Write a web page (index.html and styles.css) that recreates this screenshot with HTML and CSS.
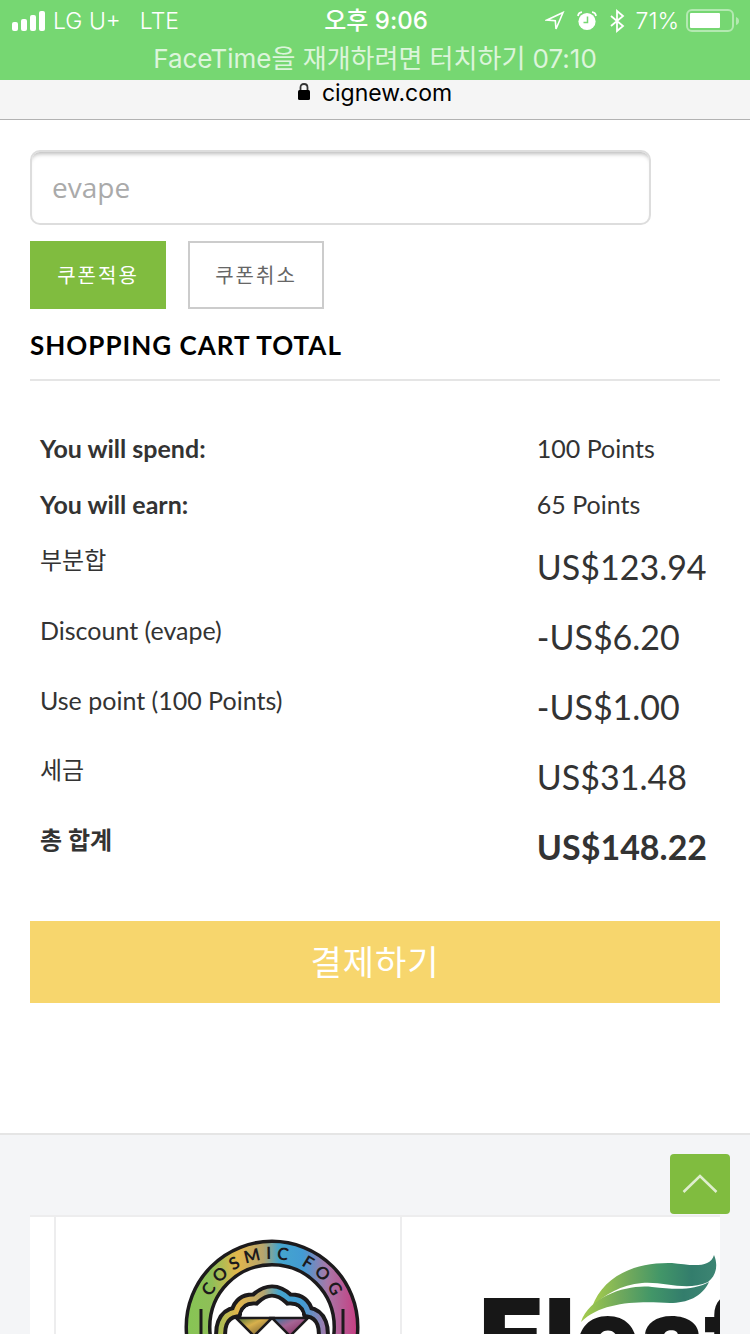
FILE: index.html
```html
<!DOCTYPE html>
<html lang="ko">
<head>
    <meta charset="UTF-8">
    <meta name="viewport" content="width=device-width, initial-scale=1.0">
    <title>cignew.com</title>
    <link rel="stylesheet" href="styles.css">
</head>
<body>
    <header class="status">
        <div class="status-row">
            <div class="status-left">
                <svg class="signal" width="34" height="20" viewBox="0 0 34 20" fill="#fff">
                    <rect x="0" y="11" width="6" height="9" rx="2"/>
                    <rect x="9" y="8" width="6" height="12" rx="2"/>
                    <rect x="18" y="4" width="6" height="16" rx="2"/>
                    <rect x="27" y="0" width="6" height="20" rx="2"/>
                </svg>
                <span>LG U+</span>
                <span class="network">LTE</span>
            </div>
            <div class="clock">오후 9:06</div>
            <div class="status-right">
                <svg width="20" height="20" viewBox="0 0 20 20" fill="none" stroke="#fff" stroke-width="1.6">
                    <path d="M18 1.5 L2 9 L10.3 9.7 L11 18 Z"/>
                </svg>
                <svg class="alarm" width="20" height="20" viewBox="0 0 20 20">
                    <circle cx="10" cy="10.5" r="8.6" fill="#fff"/>
                    <path d="M1 5 Q1.5 1.5 5 1.2 M15 1.2 Q18.5 1.5 19 5" fill="none" stroke="#fff" stroke-width="1.8"/>
                    <path d="M10.5 5.5 V11.5 H6.5" fill="none" stroke="#76d772" stroke-width="1.5"/>
                </svg>
                <svg width="16" height="24" viewBox="0 0 16 24" fill="none" stroke="#fff" stroke-width="1.8">
                    <path d="M2 7 L14 17 L8 22 V2 L14 7 L2 17"/>
                </svg>
                <span class="percent">71%</span>
                <svg class="battery" width="54" height="24" viewBox="0 0 54 24">
                    <rect x="1" y="1" width="46" height="21" rx="5" fill="none" stroke="#fff" stroke-opacity=".45" stroke-width="2"/>
                    <rect x="4" y="4" width="30" height="15" rx="1" fill="#fff"/>
                    <path d="M50 8 Q53 9 53 12 Q53 15 50 16 Z" fill="#fff" fill-opacity=".45"/>
                </svg>
            </div>
        </div>
        <div class="call">FaceTime을 재개하려면 터치하기 07:10</div>
    </header>

    <div class="url-bar">
        <svg width="12" height="18" viewBox="0 0 12 18">
            <path d="M2.5 8 V4.5 Q2.5 1 6 1 Q9.5 1 9.5 4.5 V8" fill="none" stroke="#333" stroke-width="1.8"/>
            <rect x="0" y="7" width="12" height="10" rx="1.5" fill="#000"/>
        </svg>
        <span>cignew.com</span>
    </div>

    <main class="cart">
        <form class="coupon">
            <input type="text" class="coupon-code" placeholder="evape" aria-label="쿠폰 코드">
            <div class="coupon-actions">
                <button type="button" class="btn btn-apply">쿠폰적용</button>
                <button type="button" class="btn btn-cancel">쿠폰취소</button>
            </div>
        </form>

        <h2>SHOPPING CART TOTAL</h2>

        <table class="totals">
            <tbody>
                <tr class="points">
                    <th scope="row">You will spend:</th>
                    <td>100 Points</td>
                </tr>
                <tr class="points">
                    <th scope="row">You will earn:</th>
                    <td>65 Points</td>
                </tr>
                <tr>
                    <th scope="row" class="ko">부분합</th>
                    <td>US$123.94</td>
                </tr>
                <tr>
                    <th scope="row">Discount (evape)</th>
                    <td>-US$6.20</td>
                </tr>
                <tr>
                    <th scope="row">Use point (100 Points)</th>
                    <td>-US$1.00</td>
                </tr>
                <tr>
                    <th scope="row" class="ko">세금</th>
                    <td>US$31.48</td>
                </tr>
                <tr class="grand">
                    <th scope="row" class="ko">총 합계</th>
                    <td>US$148.22</td>
                </tr>
            </tbody>
        </table>

        <button type="button" class="checkout">결제하기</button>
    </main>

    <footer class="brands">
        <button type="button" class="to-top" aria-label="맨 위로">
            <svg width="36" height="20" viewBox="0 0 36 20" fill="none" stroke="#fff" stroke-opacity=".75" stroke-width="2.5">
                <path d="M1.5 18 L18 2 L34.5 18"/>
            </svg>
        </button>
        <div class="carousel">
            <div class="slide slide-prev"></div>
            <div class="slide">
                <!-- Cosmic Fog -->
                <svg width="344" height="200" viewBox="0 0 344 200">
                    <defs>
                        <linearGradient id="fog" gradientUnits="userSpaceOnUse" x1="130" y1="0" x2="302" y2="0">
                            <stop offset="0" stop-color="#86c554"/>
                            <stop offset=".15" stop-color="#8fbf58"/>
                            <stop offset=".3" stop-color="#e3b64b"/>
                            <stop offset=".45" stop-color="#b5a46e"/>
                            <stop offset=".54" stop-color="#45a5cd"/>
                            <stop offset=".68" stop-color="#429bd3"/>
                            <stop offset=".82" stop-color="#a878a8"/>
                            <stop offset="1" stop-color="#c83c80"/>
                        </linearGradient>
                        <linearGradient id="gemLeft" x1="0" y1="0" x2="1" y2="1">
                            <stop offset="0" stop-color="#48743a"/>
                            <stop offset=".4" stop-color="#d8b04c"/>
                            <stop offset="1" stop-color="#57472c"/>
                        </linearGradient>
                        <linearGradient id="gemRight" x1="0" y1="0" x2="1" y2="1">
                            <stop offset="0" stop-color="#27799b"/>
                            <stop offset=".4" stop-color="#a56494"/>
                            <stop offset="1" stop-color="#7c1f4e"/>
                        </linearGradient>
                        <path id="ring" d="M148 110 A68 68 0 0 1 284 110"/>
                    </defs>
                    <circle cx="216" cy="110" r="74" fill="none" stroke="#1c1a1c" stroke-width="27"/>
                    <circle cx="216" cy="110" r="74" fill="none" stroke="url(#fog)" stroke-width="20"/>
                    <path d="M145 92 V130 M287 92 V130" stroke="#1c1a1c" stroke-width="3"/>
                    <text class="fog-name" text-anchor="middle"><textPath href="#ring" startOffset="51%">COSMIC FOG</textPath></text>
                    <g fill="none">
                        <path d="M167 132 C161 110 167 97 180 95 Q184 81 199 82 Q216 66 233 82 Q248 81 252 95 C265 97 271 110 265 132" stroke="#1c1a1c" stroke-width="13"/>
                        <path d="M167 132 C161 110 167 97 180 95 Q184 81 199 82 Q216 66 233 82 Q248 81 252 95 C265 97 271 110 265 132" stroke="url(#fog)" stroke-width="5"/>
                    </g>
                    <path d="M186 100 L186 96 Q190 87 202 89 Q216 76 230 89 Q242 87 246 96 L246 100 Z" fill="#fff"/>
                    <g stroke="#1c1a1c" stroke-width="2.5">
                        <path d="M180 101 H216 L198 119 Z" fill="url(#gemLeft)"/>
                        <path d="M216 101 H252 L234 119 Z" fill="url(#gemRight)"/>
                    </g>
                </svg>
            </div>
            <div class="slide">
                <!-- Eleaf -->
                <svg width="344" height="200" viewBox="0 0 344 200">
                    <defs>
                        <linearGradient id="leaf">
                            <stop offset="0" stop-color="#a5cc4d"/>
                            <stop offset=".3" stop-color="#70a95c"/>
                            <stop offset=".55" stop-color="#429668"/>
                            <stop offset=".8" stop-color="#337d6c"/>
                            <stop offset="1" stop-color="#3d8573"/>
                        </linearGradient>
                    </defs>
                    <text class="leaf-name" x="77" y="158">Eleaf</text>
                    <path d="M179 105 C188 78 228 67 250 70 C276 73 292 73 307 65 C300 80 285 86 268 86 C238 84 200 84 179 105 Z" fill="#fff" stroke="#fff" stroke-width="3"/>
                    <path d="M190 90 C201 60 231 45 270 46 C288 48 308 52 312 38 C316 47 315 58 306 65 C284 75 262 64 240 66 C219 68 203 77 190 90 Z" fill="url(#leaf)"/>
                    <path d="M179 105 C188 78 228 67 250 70 C276 73 292 73 307 65 C300 80 285 86 268 86 C238 84 200 84 179 105 Z" fill="url(#leaf)"/>
                </svg>
            </div>
        </div>
    </footer>
</body>
</html>
```
FILE: styles.css
```css
* {
    box-sizing: border-box;
}
body {
    margin: 0;
    height: 100vh;
    display: flex;
    flex-direction: column;
    overflow: hidden;
    background-color: #fff;
    color: #333;
    font-family: Lato, "Noto Sans CJK KR", sans-serif;
}
svg {
    display: block;
    flex: none;
}
button {
    padding: 0;
    border: 0;
    font-family: inherit;
    cursor: pointer;
}

/* Barra de estado */
.status {
    height: 80px;
    background-color: #76d772;
    color: #fff;
    font-family: Inter, "Noto Sans CJK KR", sans-serif;
    font-size: 23px;
    line-height: 40px;
}
.status-row {
    display: grid;
    grid-template-columns: 1fr auto 1fr;
    align-items: center;
    height: 41px;
    padding: 0 10px 0 12px;
    font-weight: 300;
}
.status-left,
.status-right {
    display: flex;
    align-items: center;
    gap: 7px;
}
.status-right {
    justify-content: flex-end;
}
.network {
    margin-left: 12px;
}
.alarm {
    margin: 0 5px;
}
.percent {
    margin-left: 4px;
}
.clock {
    font-size: 24px;
    font-weight: 500;
}
.call {
    text-align: center;
    font-size: 26px;
    font-weight: 400;
    line-height: 36px;
    opacity: 0.75;
}

.url-bar {
    display: flex;
    justify-content: center;
    gap: 12px;
    height: 40px;
    padding-top: 3px;
    background-color: #f5f5f5;
    border-bottom: 1px solid #b2b2b2;
    color: #000;
    font-family: Inter, sans-serif;
    font-size: 23px;
    line-height: 20px;
}

.cart {
    padding: 30px 30px 130px;
}
.coupon-code {
    display: block;
    width: 90%;
    height: 75px;
    padding: 0 20px 2px;
    border: 2px solid #ddd;
    border-radius: 10px;
    box-shadow: inset 0 5px 4px -3px #bbb;
    color: #333;
    font-family: "Open Sans", sans-serif;
    font-size: 28px;
}
.coupon-code::placeholder {
    color: #aaa;
}
.coupon-actions {
    display: flex;
    gap: 22px;
    margin-top: 16px;
}
.btn {
    width: 136px;
    height: 68px;
    padding-bottom: 2px;
    font-size: 20px;
    font-weight: 400;
    letter-spacing: 2px;
}
.btn-apply {
    background-color: #80bc3f;
    color: #fff;
}
.btn-cancel {
    background-color: #fff;
    border: 2px solid #ccc;
    color: #666;
}
h2 {
    margin: 16px 0 39px;
    padding-bottom: 14px;
    border-bottom: 2px solid #e5e5e5;
    color: #000;
    font-size: 26px;
    line-height: 40px;
    letter-spacing: 1px;
}

.totals {
    width: 100%;
    border-collapse: collapse;
    table-layout: fixed;
}
.totals th,
.totals td {
    padding: 10px;
    text-align: left;
    vertical-align: top;
    white-space: nowrap;
    font-weight: 400;
}
.totals th {
    width: 72%;
    font-size: 25px;
    line-height: 36px;
}
.totals td {
    font-size: 34px;
    line-height: 50px;
}
.totals .ko {
    font-size: 24px;
}
.totals .points td {
    font-size: 25px;
    line-height: 36px;
}
.totals .points th,
.totals .grand th,
.totals .grand td {
    font-weight: 700;
}
.checkout {
    display: block;
    width: 100%;
    height: 82px;
    margin-top: 39px;
    padding-bottom: 4px;
    background-color: #f7d66d;
    color: #fff;
    font-size: 34px;
    font-weight: 400;
    letter-spacing: 1px;
}

/* Marcas */
.brands {
    position: relative;
    flex: 1;
    min-height: 0;
    padding: 80px 30px 0;
    background-color: #f4f5f7;
    border-top: 2px solid #e5e5e5;
    overflow: hidden;
}
.to-top {
    position: absolute;
    top: 19px;
    right: 20px;
    display: flex;
    align-items: center;
    justify-content: center;
    width: 60px;
    height: 60px;
    border-radius: 4px;
    background-color: #80bc3f;
}
.carousel {
    display: flex;
    overflow: hidden;
    background-color: #fff;
    border-top: 2px solid #ededee;
}
.slide {
    flex: none;
    border-right: 2px solid #ededee;
}
.slide-prev {
    width: 26px;
}
.fog-name {
    fill: #1c1a1c;
    font-size: 17px;
    font-weight: 700;
    letter-spacing: 5px;
}
.leaf-name {
    fill: #171717;
    font-family: Inter, sans-serif;
    font-size: 106px;
    font-weight: 900;
}
```
